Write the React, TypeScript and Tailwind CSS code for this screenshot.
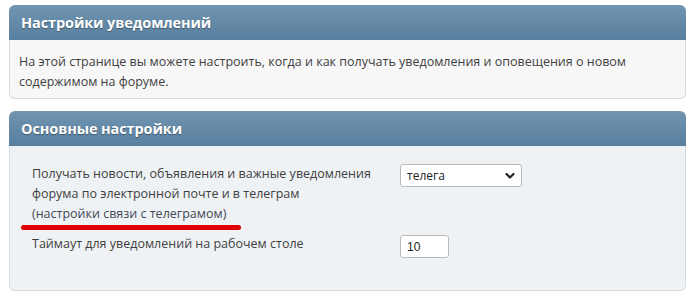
import React from "react";

const font = { fontFamily: '"Open Sans", "Noto Sans", "Liberation Sans", sans-serif' };

function Header({ title }: { title: string }) {
  return (
    <div className="h-[35px] flex items-center pl-[12px] rounded-t-[6px] bg-gradient-to-b from-[#7195b1] to-[#587f9e]">
      <span className="text-white font-bold text-[14.5px] tracking-[-0.1px] [text-shadow:0_1px_1px_rgba(0,0,0,0.35)]">{title}</span>
    </div>
  );
}

export default function App() {
  return (
    <div className="w-[692px] h-[300px] bg-white pt-[5px] pl-[9px] text-[#3f3f3f]" style={font}>
      <div className="w-[677px]">
        <Header title="Настройки уведомлений" />
        <div className="h-[59px] bg-[#f7f7f7] border border-t-0 border-[#d9d9d9] rounded-b-[6px] pl-[9px] pt-[12px] text-[12.5px] leading-[20px]">
          На этой странице вы можете настроить, когда и как получать уведомления и оповещения о новом
          <br />
          содержимом на форуме.
        </div>
      </div>

      <div className="w-[677px] mt-[12px]">
        <Header title="Основные настройки" />
        <div className="h-[145px] bg-[#eff2f5] border border-t-0 border-[#d6dbe0] rounded-b-[6px] pl-[22px] pt-[18px] text-[12.5px] leading-[20px]">
          <div className="flex">
            <div className="w-[368px]">
              <div>Получать новости, объявления и важные уведомления</div>
              <div>форума по электронной почте и в телеграм</div>
              <div className="relative inline-block">
                <a className="text-[#3f4a55] cursor-pointer">(настройки связи с телеграмом)</a>
                <div className="absolute left-[-11px] top-[21px] w-[220px] h-[5px] rounded-full bg-[#e00000]" />
              </div>
            </div>
            <div>
              <div className="relative w-[122px] h-[23px] bg-white border border-[#b9b9b9] rounded-[3px] flex items-center pl-[6px] text-[12px]">
                <span className="text-[#222]">телега</span>
                <svg className="absolute right-[6px] top-[7px]" width="10" height="8" viewBox="0 0 10 8">
                  <path d="M1.5 2 L5 5.5 L8.5 2" fill="none" stroke="#222" strokeWidth="2.2" strokeLinecap="round" strokeLinejoin="round" />
                </svg>
              </div>
            </div>
          </div>
          <div className="flex mt-[10px]">
            <div className="w-[368px]">Таймаут для уведомлений на рабочем столе</div>
            <div className="w-[49px] h-[23px] mt-[1px] bg-white border border-[#b9b9b9] rounded-[3px] flex items-center pl-[6px] text-[12px] text-[#222]" style={{ fontFamily: '"Liberation Sans", Arial, sans-serif' }}>
              10
            </div>
          </div>
        </div>
      </div>
    </div>
  );
}
